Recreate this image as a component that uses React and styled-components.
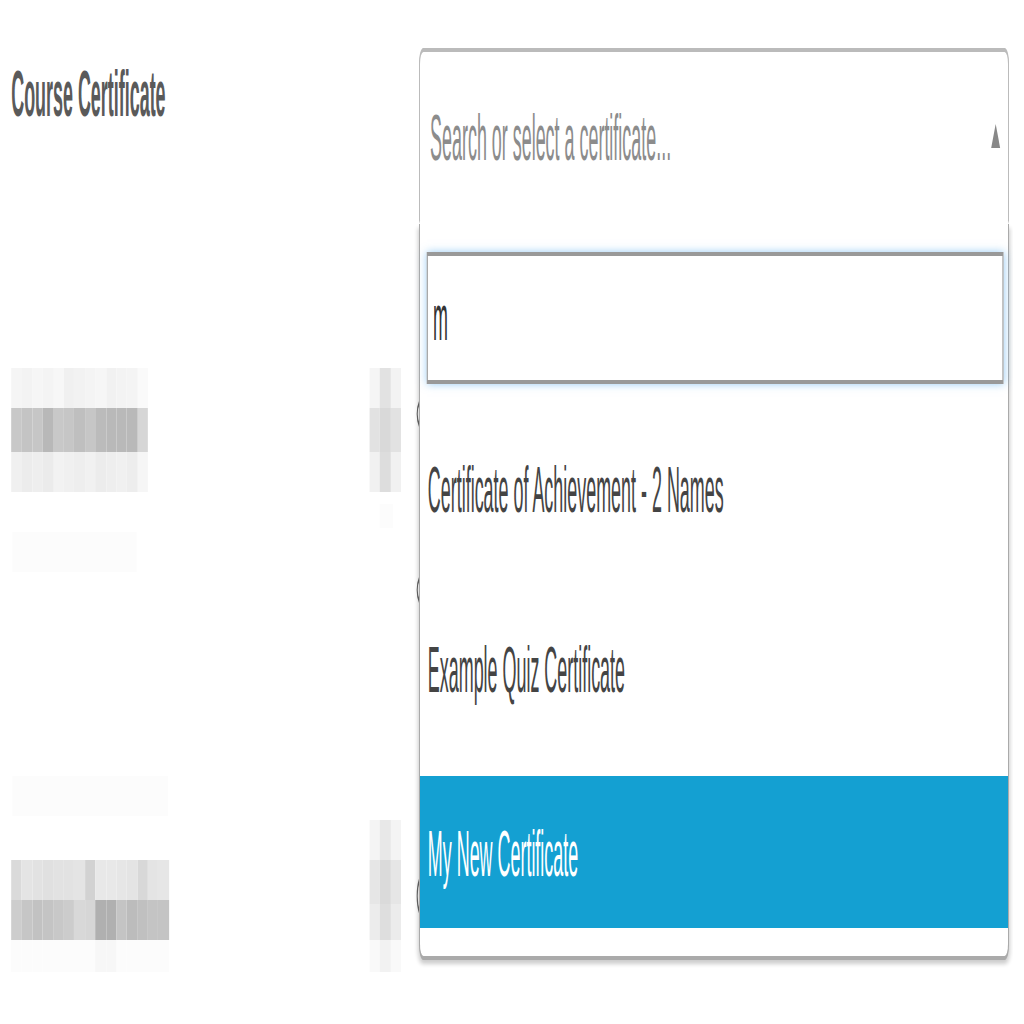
import styled, { createGlobalStyle } from "styled-components";

// the shot is stretched: everything is laid out at its own size, then scaled
const SX = 1.12;
const SY = 4;
const CELL = 9.4;

const options = [
  { label: "Certificate of Achievement - 2 Names" },
  { label: "Example Quiz Certificate" },
  { label: "My New Certificate", active: true },
];

const mosaicA = [
  { h: 10.25, cells: [245, 243, 246, 244, 247, 240, 242, 244, 246, 241, 243, 244, 250] },
  { h: 10.25, cells: [200, 196, 198, 184, 200, 198, 191, 198, 187, 185, 185, 185, 214] },
  { h: 10.25, cells: [240, 236, 238, 235, 242, 240, 238, 241, 236, 238, 240, 237, 246] },
];

const helpA = [
  { h: 10.25, cells: [245, 226, 243] },
  { h: 10.25, cells: [226, 217, 226] },
  { h: 10.25, cells: [241, 221, 241] },
];

const mosaicB = [
  { h: 10, cells: [218, 228, 226, 224, 226, 226, 228, 210, 232, 232, 230, 228, 216, 228, 230] },
  { h: 10.25, cells: [205, 198, 194, 196, 200, 204, 216, 214, 176, 176, 196, 188, 192, 196, 196] },
  { h: 7.25, cells: [252, 252, 252, 252, 252, 252, 252, 252, 247, 247, 252, 252, 252, 252, 252] },
];

const helpB = [
  { h: 10, cells: [244, 232, 244] },
  { h: 10.5, cells: [230, 218, 230] },
  { h: 9.5, cells: [236, 222, 236] },
  { h: 8, cells: [249, 242, 249] },
];

function Mosaic({ rows }) {
  return (
    <MosaicGrid>
      {rows.map((row, i) => (
        <MosaicRow key={i} $h={row.h}>
          {row.cells.map((v, j) => (
            <Tile key={j} $v={v} />
          ))}
        </MosaicRow>
      ))}
    </MosaicGrid>
  );
}

export default function App() {
  return (
    <Viewport>
      <GlobalStyle />
      <Stage>
        <FieldRow>
          <Label>Course Certificate</Label>
          <SelectWrap>
            <SelectHeader>
              <Placeholder>Search or select a certificate...</Placeholder>
              <Arrow />
            </SelectHeader>
            <Dropdown>
              <SearchInput value="m" readOnly />
              <OptionList>
                {options.map((opt) => (
                  <Option key={opt.label} $active={opt.active}>
                    {opt.label}
                  </Option>
                ))}
              </OptionList>
            </Dropdown>
          </SelectWrap>
        </FieldRow>

        <FieldRow $top={36.5}>
          <Stack>
            <Mosaic rows={mosaicA} />
            <Faint $top={10.25} $left={0.7} $w={111} $h={9.5} />
          </Stack>
          <Stack>
            <Mosaic rows={helpA} />
            <Faint $top={3} $left={9} $w={12} $h={6} />
          </Stack>
          <Stack>
            <Radio $top={7} $h={9} />
            <Radio $top={35} $h={9} />
          </Stack>
        </FieldRow>

        <FieldRow $top={41.75}>
          <Stack>
            <Faint $top={0} $left={0.7} $w={139} $h={10} />
            <Spacer $h={11.25} />
            <Mosaic rows={mosaicB} />
          </Stack>
          <Stack>
            <Spacer $h={11.25} />
            <Mosaic rows={helpB} />
          </Stack>
          <Stack>
            <Radio $top={24.25} $h={11.75} />
          </Stack>
        </FieldRow>
      </Stage>
    </Viewport>
  );
}

const GlobalStyle = createGlobalStyle`
  html, body {
    margin: 0;
    padding: 0;
    background: #fff;
  }

  body {
    overflow: hidden;
    font-family: "Liberation Sans", Arial, sans-serif;
  }
`;

const Viewport = styled.div`
  width: 1024px;
  height: 1024px;
  overflow: hidden;
  background: #fff;
`;

const Stage = styled.div`
  box-sizing: border-box;
  width: ${1024 / SX}px;
  height: ${1024 / SY}px;
  padding: 11.5px 0 0 10px;
  display: flex;
  flex-direction: column;
  transform: scale(${SX}, ${SY});
  transform-origin: 0 0;
  font-size: 16px;
  line-height: 20px;
`;

const FieldRow = styled.div`
  display: grid;
  grid-template-columns: 320px 42px 1fr;
  align-items: start;
  margin-top: ${(p) => p.$top || 0}px;
`;

const Label = styled.div`
  grid-column: 1 / 3;
  margin-top: 2px;
  font-weight: bold;
  color: #5a5a5a;
`;

const SelectWrap = styled.div`
  position: relative;
  z-index: 2;
  width: 527px;
  margin-left: 2px;
`;

const SelectHeader = styled.div`
  box-sizing: border-box;
  height: 44px;
  padding: 3px 7px 0 9px;
  display: flex;
  align-items: center;
  justify-content: space-between;
  border: 1px solid #bbb;
  border-bottom-color: transparent;
  border-radius: 4px 4px 0 0;
  background: #fff;
`;

const Placeholder = styled.span`
  color: #8c8c8c;
`;

const Arrow = styled.span`
  width: 0;
  height: 0;
  margin-top: -2px;
  border-left: 4.5px solid transparent;
  border-right: 4.5px solid transparent;
  border-bottom: 6px solid #888;
`;

const Dropdown = styled.div`
  position: absolute;
  top: 100%;
  left: 0;
  box-sizing: border-box;
  width: 100%;
  padding-top: 7px;
  background: #fff;
  border: 1px solid #aaa;
  border-top: 0;
  border-radius: 0 0 4px 4px;
  box-shadow: 0 1px 2px rgba(0, 0, 0, 0.2);
`;

const SearchInput = styled.input`
  display: block;
  box-sizing: border-box;
  width: calc(100% - 10.75px);
  height: 33.25px;
  margin: 0 4.5px 0 6.25px;
  padding: 2px 0 0 4.4px;
  border: 1px solid #999;
  border-radius: 0;
  outline: none;
  box-shadow: 0 0 4px rgba(82, 168, 236, 0.6);
  background: #fff;
  color: #333;
  font: inherit;
`;

const OptionList = styled.ul`
  list-style: none;
  margin: 0;
  padding: 7.25px 0;
  display: flex;
  flex-direction: column;
  gap: 7.5px;
`;

const Option = styled.li`
  box-sizing: border-box;
  height: 38px;
  padding: 1px 7px 0;
  display: flex;
  align-items: center;
  background: ${(p) => (p.$active ? "#14a0d2" : "transparent")};
  color: ${(p) => (p.$active ? "#fff" : "#444")};
`;

const Stack = styled.div`
  display: flex;
  flex-direction: column;
  align-items: flex-start;
`;

const Spacer = styled.div`
  height: ${(p) => p.$h}px;
`;

const MosaicGrid = styled.div`
  display: flex;
  flex-direction: column;
`;

const MosaicRow = styled.div`
  display: flex;
  height: ${(p) => p.$h}px;
`;

const Tile = styled.div`
  width: ${CELL}px;
  height: 100%;
  background: ${(p) => `rgb(${p.$v}, ${p.$v}, ${p.$v})`};
`;

const Faint = styled.div`
  width: ${(p) => p.$w}px;
  height: ${(p) => p.$h}px;
  margin: ${(p) => p.$top}px 0 0 ${(p) => p.$left}px;
  background: #fcfcfc;
`;

const Radio = styled.span`
  box-sizing: border-box;
  width: 14px;
  height: ${(p) => p.$h}px;
  margin-top: ${(p) => p.$top}px;
  border: 0.8px solid #666;
  border-radius: 50%;
`;
